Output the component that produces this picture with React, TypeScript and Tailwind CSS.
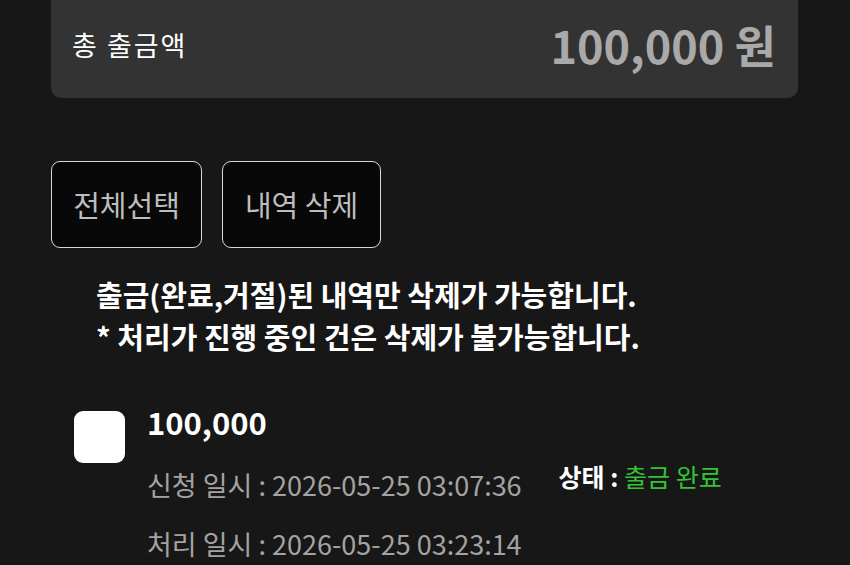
const font = { fontFamily: '"Noto Sans CJK KR", "Noto Sans", sans-serif' };

const records = [
  {
    amount: "100,000",
    requestedAt: "2026-05-25 03:07:36",
    processedAt: "2026-05-25 03:23:14",
    status: "출금 완료",
  },
];

export default function App() {
  return (
    <div
      className="min-h-[565px] w-full overflow-hidden bg-[#171717] px-[51px] pb-10 text-white"
      style={font}
    >
      {/* total card */}
      <div className="flex h-[98px] w-[747px] items-center justify-between rounded-b-[10px] bg-[#333333] pl-[21px] pr-[22px] pb-[9px]">
        <span className="text-[27px] leading-none tracking-[2px] text-white">총 출금액</span>
        <span className="text-[45px] font-bold leading-none text-[#a9a9a9]">100,000 원</span>
      </div>

      {/* buttons */}
      <div className="mt-[63px] flex gap-[20px]">
        <button className="h-[87px] w-[151px] rounded-[9px] border-[1.5px] border-[#d9d9d9] bg-[#080808] text-[29px] text-[#bdbdbd]">
          전체선택
        </button>
        <button className="h-[87px] w-[159px] rounded-[9px] border-[1.5px] border-[#d9d9d9] bg-[#080808] text-[29px] text-[#bdbdbd]">
          내역 삭제
        </button>
      </div>

      {/* notice */}
      <div className="mt-[25px] pl-[45px] text-[29px] font-bold leading-[42px] text-white">
        <p>출금(완료,거절)된 내역만 삭제가 가능합니다.</p>
        <p>* 처리가 진행 중인 건은 삭제가 불가능합니다.</p>
      </div>

      {/* list */}
      {records.map((r) => (
        <div key={r.requestedAt} className="mt-[47px] flex pl-[23px]">
          <div className="mt-[7px] h-[52px] w-[51px] shrink-0 rounded-[9px] bg-white" />
          <div className="ml-[22px] flex flex-col">
            <div className="text-[31px] font-bold leading-[36px] text-white">{r.amount}</div>
            <div className="mt-[27px] flex items-start">
              <span className="text-[27px] leading-[36px] text-[#a3a3a3]">신청 일시 : {r.requestedAt}</span>
              <span className="ml-[37px] -mt-[9px] text-[25px] leading-[36px]">
                <span className="font-bold text-white">상태 : </span>
                <span className="text-[#36c236]">{r.status}</span>
              </span>
            </div>
            <div className="mt-[23px] text-[27px] leading-[36px] text-[#a3a3a3]">
              처리 일시 : {r.processedAt}
            </div>
          </div>
        </div>
      ))}
    </div>
  );
}
